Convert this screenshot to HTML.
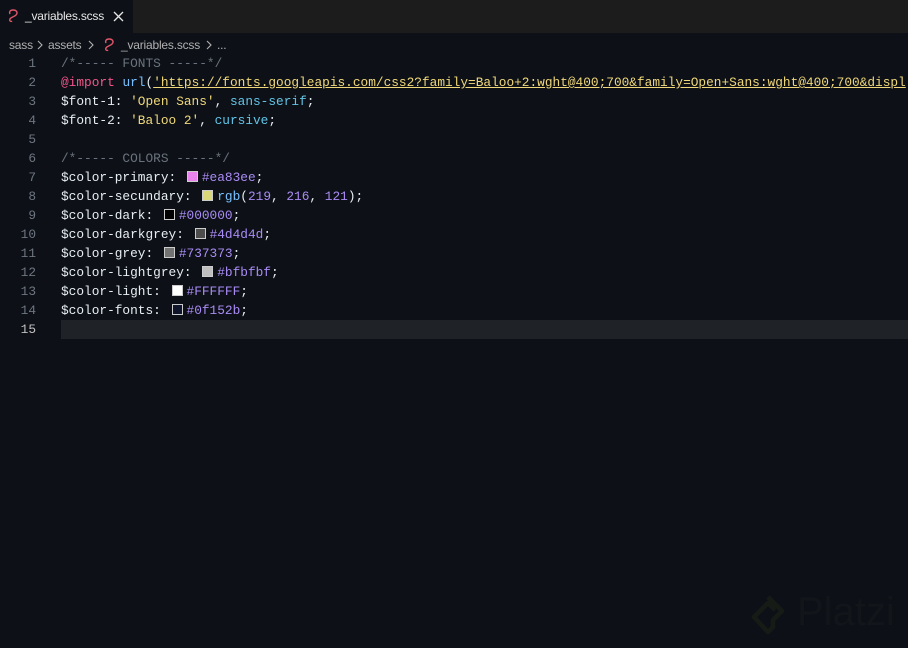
<!DOCTYPE html>
<html><head><style>
body{margin:0;width:908px;height:648px;background:#0d1117;overflow:hidden;position:relative;font-family:"Liberation Sans",sans-serif}
.tabbar{position:absolute;left:0;top:0;width:908px;height:33px;background:#1c1c1c}
.tab{position:absolute;left:0;top:0;width:133px;height:33px;background:#0d1117;color:#e6e6e6;font-size:12px}
.tab span{position:absolute;top:9px;letter-spacing:-0.2px}
.bc{position:absolute;top:36px;color:#b0b0b0;font-size:12px;height:18px;line-height:18px;white-space:pre;letter-spacing:-0.2px}
.chev{position:absolute;top:40px}
.code{position:absolute;top:54px;left:0;font-family:"Liberation Mono",monospace;font-size:12.8px}
.ln{position:absolute;left:0;width:36px;text-align:right;color:#6e7681;height:19px;line-height:19px}
.l{position:absolute;left:61px;height:19px;line-height:19px;white-space:pre;color:#e6edf3}
.cm{color:#6a737d}.kw{color:#f2558b}.fn{color:#79c0ff}.st{color:#f0d87a}.nm{color:#a98bf5}.bl{color:#62c3e6}
.sw{display:inline-block;width:11px;height:11px;border:1px solid #ccc;margin:0 4px 0 3px;vertical-align:-1px;box-sizing:border-box}
.cur{position:absolute;left:61px;top:320px;width:847px;height:19px;background:#1f2226}
</style></head><body>
<div class="tabbar"><div class="tab">
<svg style="position:absolute;left:7px;top:9px" width="12" height="14" viewBox="0 0 12 14"><path d="M6 1 C10 1 11 4 9 6 C7 8 4 8 3 10 C2 12 4 13 5 12" fill="none" stroke="#e0556a" stroke-width="1.4"/><path d="M6 1 C3 1 2 3 3 5" fill="none" stroke="#e0556a" stroke-width="1.4"/></svg>
<span style="left:25px">_variables.scss</span>
<svg style="position:absolute;left:113px;top:11px" width="11" height="11" viewBox="0 0 11 11"><path d="M1 1L10 10M10 1L1 10" stroke="#e6e6e6" stroke-width="1.3"/></svg>
</div></div>
<div class="bc" style="left:9px">sass</div>
<svg class="chev" style="left:37px" width="7" height="10" viewBox="0 0 7 10"><path d="M1 1L5 5L1 9" fill="none" stroke="#b0b0b0" stroke-width="1.1"/></svg>
<div class="bc" style="left:48px">assets</div>
<svg class="chev" style="left:88px" width="7" height="10" viewBox="0 0 7 10"><path d="M1 1L5 5L1 9" fill="none" stroke="#b0b0b0" stroke-width="1.1"/></svg>
<svg style="position:absolute;left:103px;top:38px" width="12" height="14" viewBox="0 0 12 14"><path d="M6 1 C10 1 11 4 9 6 C7 8 4 8 3 10 C2 12 4 13 5 12" fill="none" stroke="#e0556a" stroke-width="1.4"/><path d="M6 1 C3 1 2 3 3 5" fill="none" stroke="#e0556a" stroke-width="1.4"/></svg>
<div class="bc" style="left:121px">_variables.scss</div>
<svg class="chev" style="left:206px" width="7" height="10" viewBox="0 0 7 10"><path d="M1 1L5 5L1 9" fill="none" stroke="#b0b0b0" stroke-width="1.1"/></svg>
<div class="bc" style="left:217px">...</div>
<div class="cur"></div>
<div class="code">
<div class="ln" style="top:0">1</div><div class="l cm" style="top:0">/*----- FONTS -----*/</div>
<div class="ln" style="top:19px">2</div><div class="l" style="top:19px"><span class="kw">@import</span> <span class="fn">url</span>(<span class="st" style="text-decoration:underline">'https://fonts.googleapis.com/css2?family=Baloo+2:wght@400;700&amp;family=Open+Sans:wght@400;700&amp;displ</span></div>
<div class="ln" style="top:38px">3</div><div class="l" style="top:38px">$font-1: <span class="st">'Open Sans'</span>, <span class="bl">sans-serif</span>;</div>
<div class="ln" style="top:57px">4</div><div class="l" style="top:57px">$font-2: <span class="st">'Baloo 2'</span>, <span class="bl">cursive</span>;</div>
<div class="ln" style="top:76px">5</div>
<div class="ln" style="top:95px">6</div><div class="l cm" style="top:95px">/*----- COLORS -----*/</div>
<div class="ln" style="top:114px">7</div><div class="l" style="top:114px">$color-primary: <span class="sw" style="background:#ea83ee"></span><span class="nm">#ea83ee</span>;</div>
<div class="ln" style="top:133px">8</div><div class="l" style="top:133px">$color-secundary: <span class="sw" style="background:#dbd879"></span><span class="fn">rgb</span>(<span class="nm">219</span>, <span class="nm">216</span>, <span class="nm">121</span>);</div>
<div class="ln" style="top:152px">9</div><div class="l" style="top:152px">$color-dark: <span class="sw" style="background:#000"></span><span class="nm">#000000</span>;</div>
<div class="ln" style="top:171px">10</div><div class="l" style="top:171px">$color-darkgrey: <span class="sw" style="background:#4d4d4d"></span><span class="nm">#4d4d4d</span>;</div>
<div class="ln" style="top:190px">11</div><div class="l" style="top:190px">$color-grey: <span class="sw" style="background:#737373"></span><span class="nm">#737373</span>;</div>
<div class="ln" style="top:209px">12</div><div class="l" style="top:209px">$color-lightgrey: <span class="sw" style="background:#bfbfbf"></span><span class="nm">#bfbfbf</span>;</div>
<div class="ln" style="top:228px">13</div><div class="l" style="top:228px">$color-light: <span class="sw" style="background:#fff"></span><span class="nm">#FFFFFF</span>;</div>
<div class="ln" style="top:247px">14</div><div class="l" style="top:247px">$color-fonts: <span class="sw" style="background:#0f152b"></span><span class="nm">#0f152b</span>;</div>
<div class="ln" style="top:266px;color:#c0c0c0">15</div>
</div>
<svg style="position:absolute;left:745px;top:590px" width="50" height="52" viewBox="0 0 50 52"><path d="M23 7 L37 21 L28 30 L28 37 L23 42 L9 27 L23 13 L30 20" fill="none" stroke="#171b15" stroke-width="4.5" stroke-linejoin="round"/></svg>
<div style="position:absolute;left:797px;top:590px;font-size:40px;color:#12161a;font-family:'Liberation Sans',sans-serif">Platzi</div>
</body></html>
